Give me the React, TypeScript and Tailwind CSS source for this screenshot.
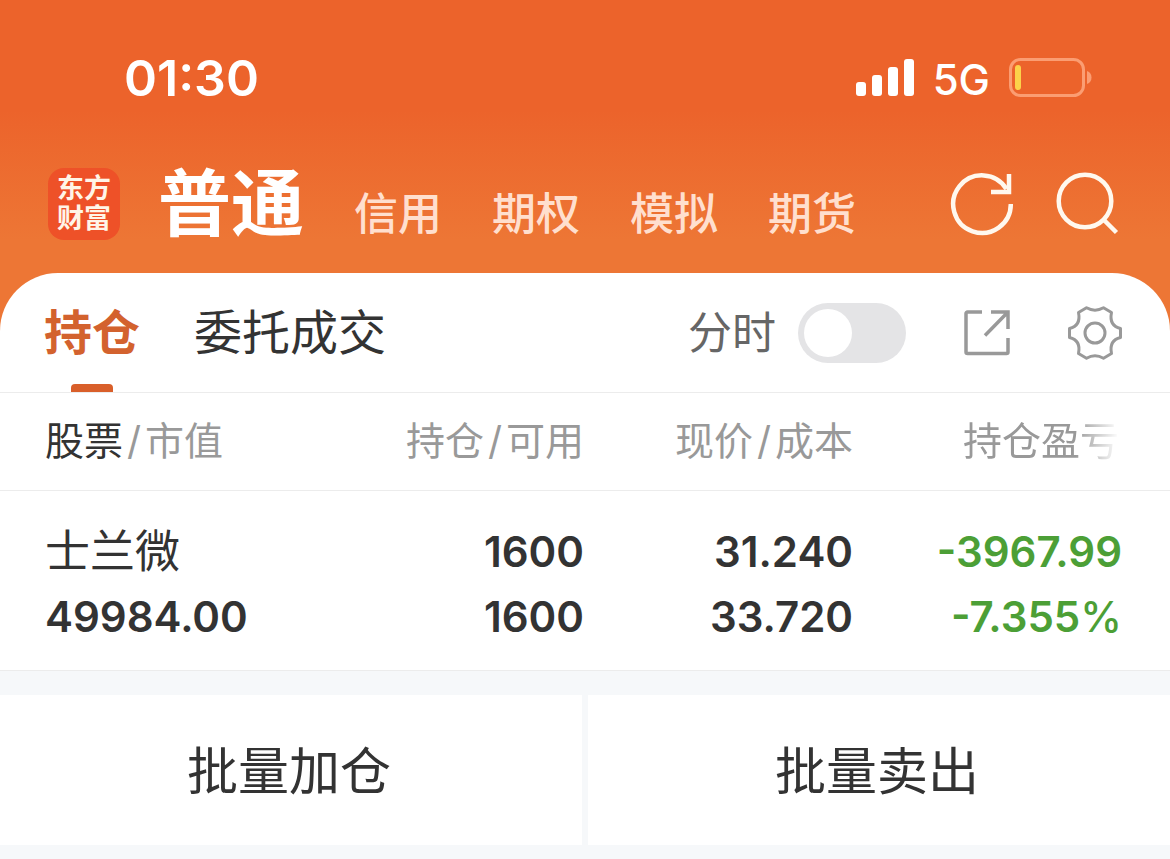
import type { ReactNode } from "react";

const accountTabs = ["普通", "信用", "期权", "模拟", "期货"];

const holdings = [
  {
    name: "士兰微",
    value: "49984.00",
    held: "1600",
    available: "1600",
    price: "31.240",
    cost: "33.720",
    profit: "-3967.99",
    profitRate: "-7.355",
  },
];

function StatusBar() {
  return (
    <div className="flex items-center justify-between pt-[48px] pr-[78px] pl-[124px] text-white">
      <span className="text-[50px] leading-[60px] font-semibold">01:30</span>
      <div className="flex items-center">
        <svg viewBox="0 0 58 38" className="h-[38px] w-[58px]" fill="currentColor" aria-hidden="true">
          <rect x="0" y="23" width="10" height="14" rx="3" />
          <rect x="16" y="16" width="10" height="21" rx="3" />
          <rect x="32" y="8" width="10" height="29" rx="3" />
          <rect x="48" y="0" width="10" height="37" rx="3" />
        </svg>
        <span className="ml-[19px] pt-[3px] text-[42px] leading-[57px] font-medium">5G</span>
        <svg viewBox="0 0 83 40" className="ml-[19px] h-[40px] w-[83px]" aria-hidden="true">
          <rect x="1.500" y="1.500" width="73" height="36" rx="10" fill="none" stroke="#fb9d72" strokeWidth="3" />
          <rect x="6" y="7" width="6" height="25" rx="3" fill="#fcd24a" />
          <path d="M78 13c3 1 4.500 3.500 4.500 6.500s-1.500 5.500-4.500 6.500z" fill="#fb9d72" />
        </svg>
      </div>
    </div>
  );
}

function Logo() {
  return (
    <div className="flex size-[72px] shrink-0 flex-col items-center justify-center rounded-[16px] bg-[#ee5128] text-[27px] leading-[30px] font-bold text-[#fff5e8]">
      <span>东方</span>
      <span>财富</span>
    </div>
  );
}

function IconButton({ label, children }: { label: string; children: ReactNode }) {
  return (
    <button type="button" aria-label={label} className="shrink-0">
      {children}
    </button>
  );
}

function AccountNav() {
  return (
    <nav className="flex items-center pt-[48px] pr-[51px] pb-[21px] pl-[48px]">
      <Logo />
      <div className="ml-[38px] flex items-baseline gap-[50px] whitespace-nowrap">
        {accountTabs.map((tab, i) => (
          <button
            key={tab}
            type="button"
            className={
              i === 0
                ? "text-[73px] leading-[96px] font-bold text-white"
                : "text-[44px] leading-[60px] font-medium text-[#ffdfce]"
            }
          >
            {tab}
          </button>
        ))}
      </div>
      <div className="ml-auto flex items-center gap-[41px] text-[#fff8ee]">
        <IconButton label="刷新">
          <svg viewBox="0 0 64 64" className="size-[64px]" fill="none" stroke="currentColor" strokeWidth="4.500">
            <path d="M60.800 32A28.800 28.800 0 1 1 56.500 17" />
            <path d="M59 2V20H41" />
          </svg>
        </IconButton>
        <IconButton label="搜索">
          <svg viewBox="0 0 64 64" className="size-[64px]" fill="none" stroke="currentColor" strokeWidth="4.500">
            <circle cx="30" cy="29" r="26.300" />
            <path d="M48.500 47.500L61.500 60.500" />
          </svg>
        </IconButton>
      </div>
    </nav>
  );
}

function PanelToolbar() {
  return (
    <div className="flex h-[120px] items-center border-b border-[#ececec] pr-[47px] pl-[44px] text-[48px] leading-[72px] whitespace-nowrap">
      <button type="button" className="flex h-full flex-col items-center font-bold text-[#d3622e]">
        <span className="pt-[24px]">持仓</span>
        <span className="mt-auto h-[8px] w-[42px] rounded-t-[4px] bg-[#d95f2a]" />
      </button>
      <button type="button" className="ml-[54px] text-[#333333]">
        委托成交
      </button>
      <label className="ml-auto flex items-center gap-[22px] text-[44px] text-[#666666]">
        分时
        <input
          type="checkbox"
          role="switch"
          className="h-[60px] w-[108px] appearance-none rounded-full bg-[#e4e4e6] p-[6px] before:block before:size-[48px] before:rounded-full before:bg-white checked:bg-[#d95f2a] checked:before:ml-auto"
        />
      </label>
      <div className="ml-[57px] flex items-center gap-[56px] text-[#999999]">
        <IconButton label="分享">
          <svg viewBox="0 0 48 48" className="size-[48px]" fill="none" stroke="currentColor" strokeWidth="3.500">
            <path d="M19 3H4.500a1.500 1.500 0 0 0-1.500 1.500V43A1.500 1.500 0 0 0 4.500 44.500H43.500A1.500 1.500 0 0 0 45 43V29" />
            <path d="M28 3H45V20M44.500 3.500L22 26.500" />
          </svg>
        </IconButton>
        <IconButton label="设置">
          <svg viewBox="0 0 56 56" className="size-[56px]" fill="none" stroke="currentColor" strokeWidth="3" strokeLinejoin="round">
            <circle cx="28" cy="28" r="10" />
            <path d="M19.500 2.800Q28 7.500 36.500 2.800L44.500 7.500C43 15 45 21.500 53.500 23.500V32.500C45 34.500 43 41 44.500 48.500L36.500 53.200Q28 48.500 19.500 53.200L11.500 48.500C13 41 11 34.500 2.500 32.500V23.500C11 21.500 13 15 11.500 7.500Z" />
          </svg>
        </IconButton>
      </div>
    </div>
  );
}

function Slash() {
  return <span className="mx-[4px]">/</span>;
}

function HoldingsTable() {
  return (
    <table className="w-full table-fixed border-collapse text-right whitespace-nowrap">
      <colgroup>
        <col className="w-[27%]" />
        <col className="w-[23%]" />
        <col className="w-[23%]" />
        <col className="w-[27%]" />
      </colgroup>
      <thead>
        <tr className="h-[97px] border-b border-[#ececec] text-[39px] leading-[60px] text-[#999999] *:font-normal">
          <th scope="col" className="pl-[45px] text-left">
            <span className="text-[#333333]">股票</span>
            <Slash />
            市值
          </th>
          <th scope="col" className="pr-[1px]">
            持仓
            <Slash />
            可用
          </th>
          <th scope="col" className="pr-[1px]">
            现价
            <Slash />
            成本
          </th>
          <th scope="col" className="pr-[51px]">
            <span className="[mask-image:linear-gradient(to_right,black_72%,transparent)]">持仓盈亏</span>
          </th>
        </tr>
      </thead>
      <tbody>
        {holdings.map((h) => (
          <tr
            key={h.name}
            className="h-[180px] border-b border-[#ececec] text-[42px] leading-[65px] font-semibold text-[#333333] *:pt-[7px]"
          >
            <td className="pl-[45px] text-left">
              <div className="text-[45px] font-normal">{h.name}</div>
              <div>{h.value}</div>
            </td>
            <td className="pr-[1px]">
              <div>{h.held}</div>
              <div>{h.available}</div>
            </td>
            <td className="pr-[1px]">
              <div>{h.price}</div>
              <div>{h.cost}</div>
            </td>
            <td className="pr-[48px] text-[#4c9f36]">
              <div>{h.profit}</div>
              <div>
                {h.profitRate}
                <span className="font-medium">%</span>
              </div>
            </td>
          </tr>
        ))}
      </tbody>
    </table>
  );
}

function BatchActions() {
  return (
    <div className="grid grid-cols-2 gap-[6px] pt-[24px] text-[51px] leading-[78px] text-[#333333]">
      <button type="button" className="bg-white pt-[38px] pr-[4px] pb-[34px]">
        批量加仓
      </button>
      <button type="button" className="bg-white pt-[38px] pr-[4px] pb-[34px]">
        批量卖出
      </button>
    </div>
  );
}

export default function App() {
  return (
    <div className="min-h-screen bg-[#f6f8fa] font-['Inter','Noto_Sans_CJK_SC',sans-serif]">
      <header className="bg-[linear-gradient(to_bottom,#ec632b_0px,#ec632b_110px,#ed7635_240px)]">
        <StatusBar />
        <AccountNav />
        <div className="rounded-t-[58px] bg-white">
          <PanelToolbar />
        </div>
      </header>
      <main>
        <div className="bg-white">
          <HoldingsTable />
        </div>
        <BatchActions />
      </main>
    </div>
  );
}
